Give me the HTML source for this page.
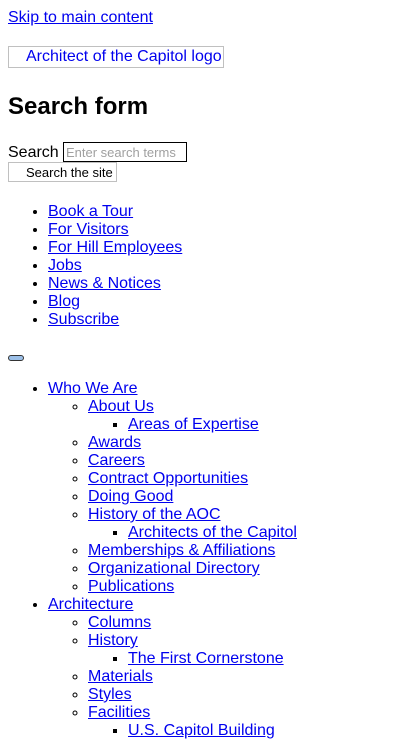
<!DOCTYPE html>
<html><head><meta charset="utf-8"><style>
html,body{margin:0;padding:0;background:#fff;}
body{font-family:"Liberation Sans",sans-serif;font-size:16px;line-height:18px;color:#000;width:412px;height:732px;overflow:hidden;position:relative;}
a{color:#0000ee;text-decoration:underline;}
.abs{position:absolute;}
ul{margin:0;padding-left:40px;list-style:disc;}
ul ul{list-style:circle;}
ul ul ul{list-style:square;}
li{line-height:18px;}
</style></head><body>
<div class="abs" style="left:8px;top:9px;"><a href="#">Skip to main content</a></div>
<div class="abs" style="left:8px;top:46px;width:214px;height:20px;border:1px solid #c0c0c0;box-sizing:content-box;">
<a href="#" style="position:absolute;left:17px;top:1px;text-decoration:none;white-space:nowrap;">Architect of the Capitol logo</a></div>
<div class="abs" style="left:8px;top:93px;font-size:24px;font-weight:bold;line-height:28px;">Search form</div>
<div class="abs" style="left:8px;top:144px;">Search</div>
<div class="abs" style="left:63px;top:142px;width:120px;height:18px;border:1px solid #000;font-size:13px;color:#a0a0a0;line-height:19px;padding-left:2px;box-sizing:content-box;white-space:nowrap;overflow:hidden;">Enter search terms</div>
<div class="abs" style="left:8px;top:162px;width:107px;height:18px;border:1px solid #c0c0c0;font-size:13px;line-height:19px;"><span style="position:absolute;left:17px;top:0;white-space:nowrap;">Search the site</span></div>
<ul class="abs" style="left:8px;top:203px;">
<li><a href="#">Book a Tour</a></li>
<li><a href="#">For Visitors</a></li>
<li><a href="#">For Hill Employees</a></li>
<li><a href="#">Jobs</a></li>
<li><a href="#">News &amp; Notices</a></li>
<li><a href="#">Blog</a></li>
<li><a href="#">Subscribe</a></li>
</ul>
<div class="abs" style="left:8px;top:355px;width:14px;height:4px;border:1px solid #333;border-radius:3px;background:#9cc0e8;"></div>
<ul class="abs" style="left:8px;top:380px;">
<li><a href="#">Who We Are</a>
<ul>
<li><a href="#">About Us</a><ul><li><a href="#">Areas of Expertise</a></li></ul></li>
<li><a href="#">Awards</a></li>
<li><a href="#">Careers</a></li>
<li><a href="#">Contract Opportunities</a></li>
<li><a href="#">Doing Good</a></li>
<li><a href="#">History of the AOC</a><ul><li><a href="#">Architects of the Capitol</a></li></ul></li>
<li><a href="#">Memberships &amp; Affiliations</a></li>
<li><a href="#">Organizational Directory</a></li>
<li><a href="#">Publications</a></li>
</ul></li>
<li><a href="#">Architecture</a>
<ul>
<li><a href="#">Columns</a></li>
<li><a href="#">History</a><ul><li><a href="#">The First Cornerstone</a></li></ul></li>
<li><a href="#">Materials</a></li>
<li><a href="#">Styles</a></li>
<li><a href="#">Facilities</a><ul><li><a href="#">U.S. Capitol Building</a></li></ul></li>
</ul></li>
</ul>
</body></html>
